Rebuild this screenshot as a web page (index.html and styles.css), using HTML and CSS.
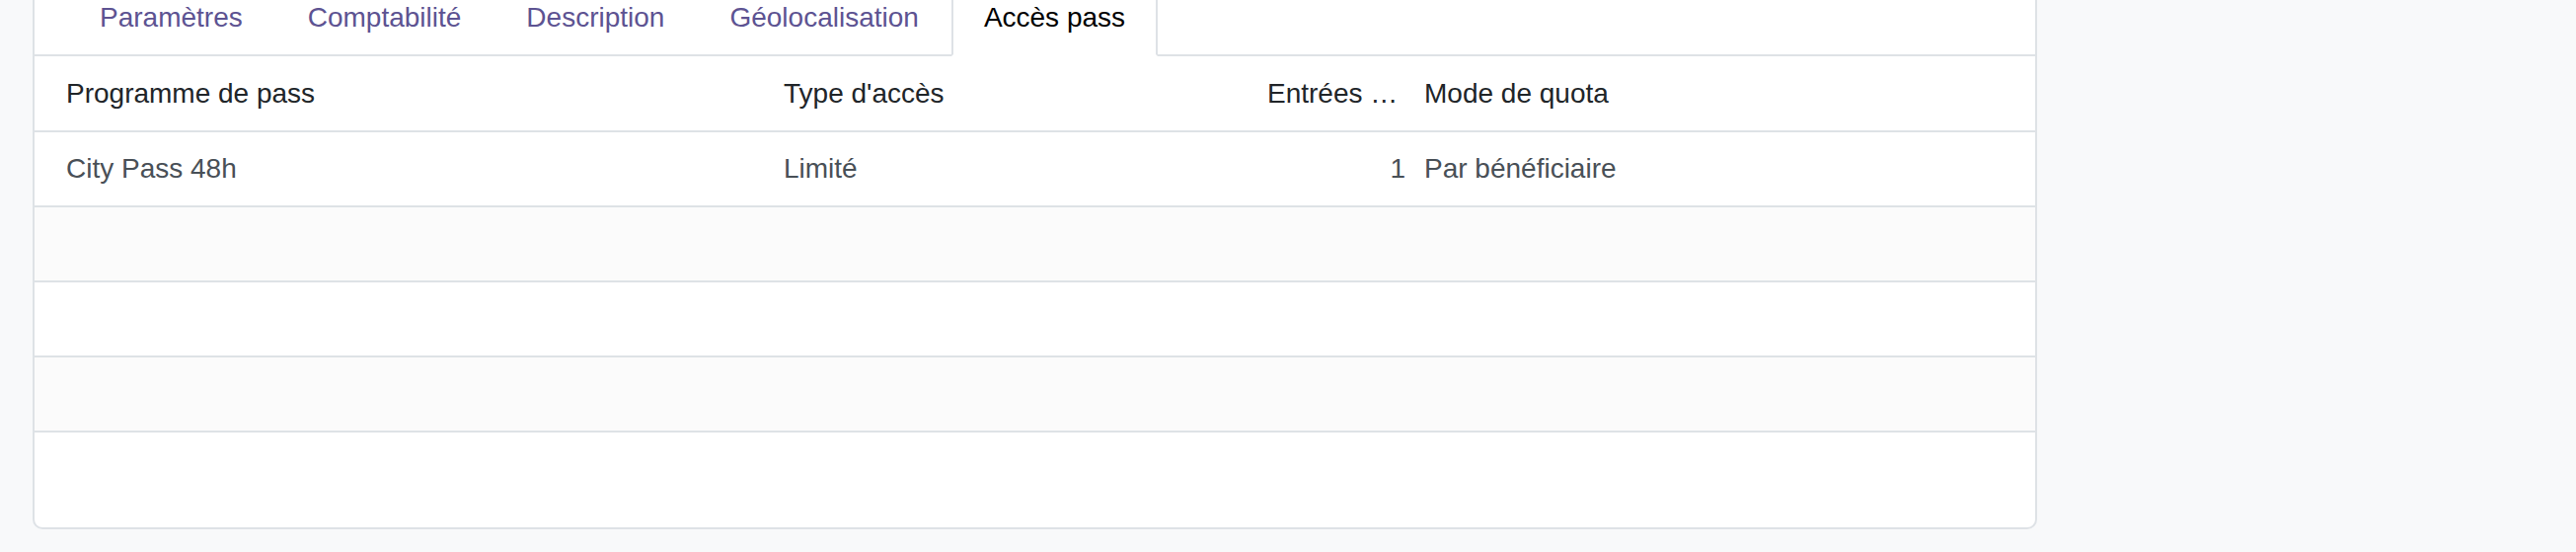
FILE: index.html
```html
<!DOCTYPE html>
<html>
<head>
	<title>Accès pass</title>
	<link rel="stylesheet" href="styles.css">
</head>
<body>
	<div class="sheet">

		<!-- Notebook tabs -->
		<ul class="tabs">
			<li class="tab">Paramètres</li>
			<li class="tab">Comptabilité</li>
			<li class="tab">Description</li>
			<li class="tab">Géolocalisation</li>
			<li class="tab active">Accès pass</li>
		</ul>

		<!-- Pass access lines -->
		<table class="lines">
			<colgroup>
				<col class="col-program">
				<col class="col-type">
				<col class="col-entries">
				<col>
			</colgroup>
			<thead>
				<tr>
					<th class="first">Programme de pass</th>
					<th>Type d'accès</th>
					<th class="num" title="Entrées autorisées">Entrées …</th>
					<th class="last">Mode de quota</th>
				</tr>
			</thead>
			<tbody>
				<tr>
					<td class="first">City Pass 48h</td>
					<td>Limité</td>
					<td class="num">1</td>
					<td class="last">Par bénéficiaire</td>
				</tr>
				<tr class="empty"><td colspan="4"></td></tr>
				<tr class="empty"><td colspan="4"></td></tr>
				<tr class="empty"><td colspan="4"></td></tr>
			</tbody>
		</table>

	</div>
</body>
</html>
```
FILE: styles.css
```css
/* General reset */
* {
	margin: 0;
	padding: 0;
	box-sizing: border-box;
}

body {
	background-color: #f8f9fa;
	font-family: "Liberation Sans", Arial, sans-serif;
	font-size: 28px;
	line-height: 42px;
	color: #212529;
}

/* White card holding the notebook */
.sheet {
	width: 2031px;
	margin: -21px 0 0 33px;
	padding-bottom: 96px;
	background-color: #fff;
	border: 2px solid #dee2e6;
	border-top: none;
	border-radius: 0 0 10px 10px;
}

/* Tabs */
.tabs {
	display: flex;
	list-style: none;
	padding-left: 33px;
	border-bottom: 2px solid #dee2e6;
}

.tabs .tab {
	padding: 16px 31px;
	border: 2px solid transparent;
	margin-bottom: -2px;
	color: #5d5392;
	cursor: pointer;
}

.tabs .tab.active {
	color: #000;
	background-color: #fff;
	border-color: #dee2e6 #dee2e6 #fff;
}

/* List of lines */
.lines {
	width: 100%;
	table-layout: fixed;
	border-collapse: collapse;
}

.col-program { width: 748px; }
.col-type { width: 490px; }
.col-entries { width: 162px; }

.lines th,
.lines td {
	height: 76px;
	padding: 16px 11px;
	text-align: left;
	font-weight: normal;
	border-bottom: 2px solid #dee2e6;
	white-space: nowrap;
	overflow: hidden;
}

.lines td {
	color: #495057;
}

.lines .first {
	padding-left: 32px;
}

.lines .last {
	padding-left: 8px;
}

.lines .num {
	text-align: right;
}

.lines th.num {
	padding-right: 16px;
	text-align: left;
}

.lines tbody tr:nth-child(even) td {
	background-color: #fbfbfb;
}
```
